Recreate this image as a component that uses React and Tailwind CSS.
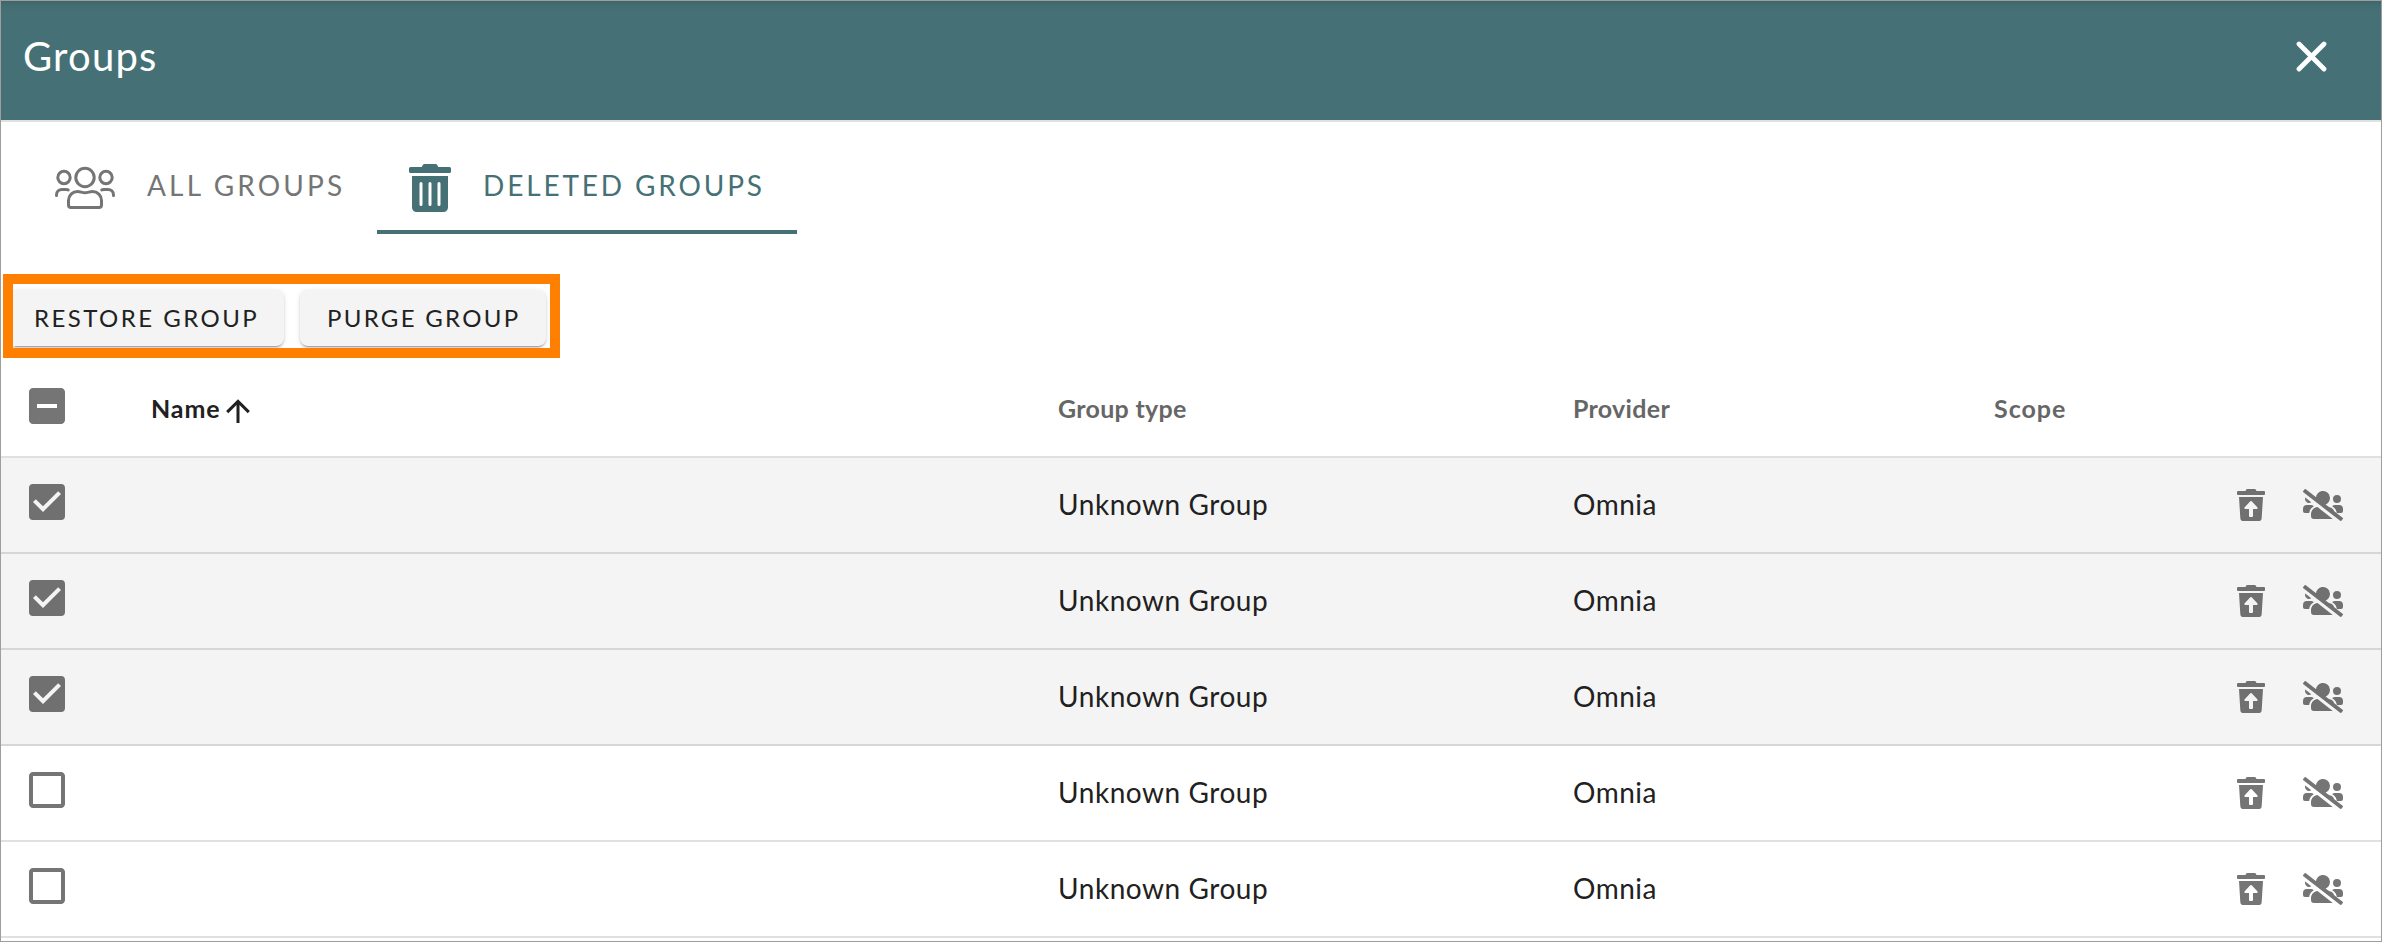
import { FaTrashAlt, FaTrashRestore, FaUsersSlash } from "react-icons/fa";
import { MdCheckBox, MdCheckBoxOutlineBlank, MdIndeterminateCheckBox } from "react-icons/md";

const GRID = "grid grid-cols-[1057px_515px_421px_1fr] items-center";
const RAISED = "mt-1.5 h-14 shrink-0 whitespace-nowrap bg-[#f4f4f4] text-left text-2xl text-[#212121] shadow-[0_3px_1px_-2px_rgba(0,0,0,0.2),0_2px_2px_0_rgba(0,0,0,0.14),0_1px_5px_0_rgba(0,0,0,0.12)]";

function GroupsIcon() {
  return (
    <svg className="mb-1.5 h-12 w-[60px]" viewBox="0 0 60 48" fill="none" stroke="currentColor" strokeWidth="3" strokeLinecap="round">
      <circle cx="30" cy="16.5" r="9.2" />
      <circle cx="9" cy="16.5" r="6.2" />
      <circle cx="51" cy="16.5" r="6.2" />
      <path d="M1.5 34.5V34C1.5 30.5 4 28.5 7 28.5H11C12 28.5 12.5 28.6 13.2 28.9" />
      <path d="M58.5 34.5V34C58.5 30.5 56 28.5 53 28.5H49C48 28.5 47.5 28.6 46.8 28.9" />
      <path d="M22.5 30.5C25.5 30.5 27 31.7 30 31.7S34.5 30.5 37.5 30.5C42.5 30.5 46.5 34.5 46.5 39.5V44C46.5 45.5 45.5 46.5 44 46.5H16C14.5 46.5 13.5 45.5 13.5 44V39.5C13.5 34.5 17.5 30.5 22.5 30.5Z" />
    </svg>
  );
}

function Row({ checked }) {
  return (
    <div className={`${GRID} h-24 border-b-2 ${checked ? "border-[#d6d6d6] bg-[#f4f4f4] text-[#707070]" : "border-[#e0e0e0] bg-white text-[#757575]"}`}>
      <div className="pb-1.5 pl-[22px]">
        {checked ? <MdCheckBox size={48} /> : <MdCheckBoxOutlineBlank size={48} />}
      </div>
      <div className="pb-0.5 text-[28px] tracking-[0.55px] text-[#212121]">Unknown Group</div>
      <div className="pb-0.5 text-[28px] tracking-[0.5px] text-[#212121]">Omnia</div>
      <div className="flex justify-end gap-[38px] pr-[38px]">
        <FaTrashRestore className="h-8 w-7" />
        <FaUsersSlash className="h-8 w-10" />
      </div>
    </div>
  );
}

export default function App() {
  return (
    <div className="flex h-[942px] w-[2382px] flex-col overflow-hidden border border-[#9e9e9e] bg-white font-[Lato,sans-serif] leading-none">
      <header className="flex h-[121px] shrink-0 items-start justify-between border-b-2 border-[#e0e0e0] bg-[#457176] pl-[22px] pr-[54px] text-white shadow-[inset_0_10px_8px_-8px_rgba(0,0,0,0.12)]">
        <h1 className="pt-[35px] text-[40px] tracking-[1.2px]">Groups</h1>
        <svg className="mt-10 h-[31px] w-[31px]" viewBox="0 0 31 31" fill="none" stroke="currentColor" strokeWidth="4.8" strokeLinecap="round">
          <path d="M3 3L28 28M28 3L3 28" />
        </svg>
      </header>

      <nav className="flex h-28 shrink-0 pl-[22px]">
        <button className="flex w-[354px] items-center gap-8 border-b-4 border-transparent pl-8 pt-6 text-[28px] tracking-[3.15px] text-[#757575]">
          <GroupsIcon />
          <span className="mb-1.5 whitespace-nowrap">ALL GROUPS</span>
        </button>
        <button className="flex w-[420px] items-center gap-8 border-b-4 border-[#457176] pl-8 pt-6 text-[28px] tracking-[2.85px] text-[#457176]">
          <FaTrashAlt className="h-12 w-[42px]" />
          <span className="mb-1.5 whitespace-nowrap">DELETED GROUPS</span>
        </button>
      </nav>

      <div className="ml-0.5 mt-10 flex h-[84px] w-[557px] shrink-0 items-start gap-4 overflow-hidden border-10 border-[#ff8000]">
        <button className={`${RAISED} w-[271px] rounded-r-lg pl-[21px] tracking-[2.45px]`}>
          RESTORE GROUP
        </button>
        <button className={`${RAISED} w-[246px] rounded-lg pl-[27px] tracking-[2.3px]`}>
          PURGE GROUP
        </button>
      </div>

      <div className={`${GRID} h-[100px] shrink-0 border-b-2 border-[#e0e0e0] text-[25px] font-bold tracking-[0.3px] text-[#666]`}>
        <div className="flex items-center pl-[22px]">
          <MdIndeterminateCheckBox size={48} className="mb-0.5 text-[#757575]" />
          <span className="ml-20 w-[69px] pt-0.5 tracking-[0.9px] text-[#212121]">Name</span>
          <svg className="mt-2 h-9 w-9 text-[#212121]" viewBox="0 0 24 24" fill="currentColor">
            <path d="M13 20H11V8L5.5 13.5L4.08 12.08L12 4.16L19.92 12.08L18.5 13.5L13 8V20Z" />
          </svg>
        </div>
        <div className="pt-0.5">Group type</div>
        <div className="pt-0.5">Provider</div>
        <div className="pt-0.5 tracking-[1px]">Scope</div>
      </div>

      <div className="shrink-0">
        <Row checked />
        <Row checked />
        <Row checked />
        <Row />
        <Row />
      </div>
    </div>
  );
}
